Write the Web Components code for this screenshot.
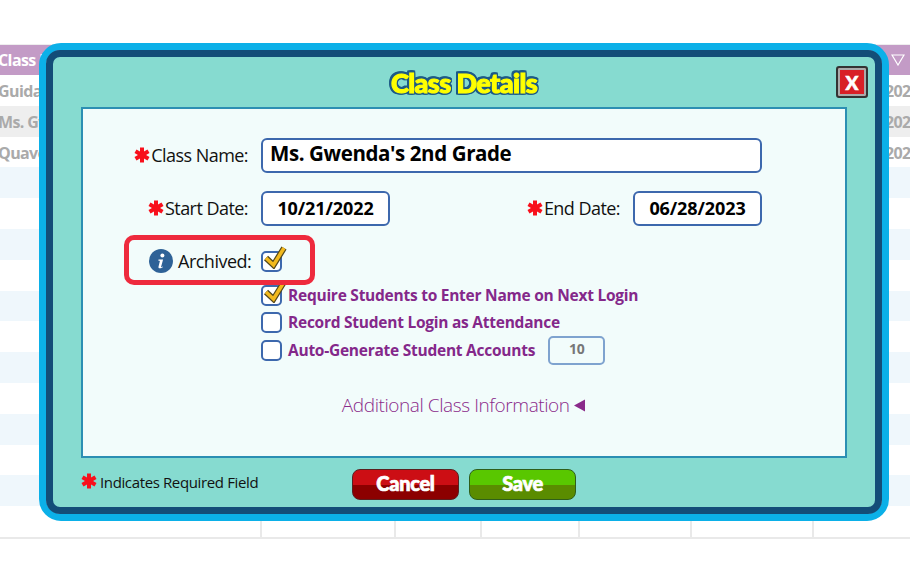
<!DOCTYPE html>
<html>
<head>
<meta charset="utf-8">
<style>
  html, body { margin: 0; padding: 0; background: #fff; }
  body { width: 910px; height: 571px; overflow: hidden; position: relative; font-family: "Open Sans", "Liberation Sans", sans-serif; }
</style>
</head>
<body>
<class-table></class-table>
<class-modal>
  <form-field slot="name" label="Class Name:" required wide value="Ms. Gwenda's 2nd Grade"></form-field>
  <form-field slot="start" label="Start Date:" required value="10/21/2022"></form-field>
  <form-field slot="end" label="End Date:" required auto value="06/28/2023"></form-field>
  <check-box slot="archived" checked></check-box>
  <check-box slot="opts" checked>Require Students to Enter Name on Next Login</check-box>
  <check-box slot="opts">Record Student Login as Attendance</check-box>
  <check-box slot="opts" count="10">Auto-Generate Student Accounts</check-box>
  <game-button slot="btns" color="red">Cancel</game-button>
  <game-button slot="btns" color="green">Save</game-button>
</class-modal>

<script>
const ASTERISK = `<svg class="star" width="18" height="18" viewBox="-9 -9 18 18" aria-hidden="true"><g stroke="#f8101c" stroke-width="4" stroke-linecap="butt"><path d="M0-7.500V7.500"/><path d="M-6.500-3.800L6.500 3.800"/><path d="M-6.500 3.800L6.500-3.800"/></g></svg>`;

class ClassTable extends HTMLElement {
  constructor() {
    super();
    this.attachShadow({ mode: 'open' });
    const names = ['Guidance Class', "Ms. Gwenda's 2nd Grade", 'Quaver Class'];
    let rows = '';
    for (let i = 0; i < 15; i++) {
      let cls = i == 1 ? 'gray' : (i >= 3 && i % 2 == 1 ? 'blue' : '');
      let name = names[i] || '';
      let yr = i < 3 ? '2022' : '';
      rows += `<div class="row ${cls}"><span class="first">${name}</span><span></span><span></span><span></span><span></span><span></span><span class="last">${yr}</span></div>`;
    }
    this.shadowRoot.innerHTML = `
    <style>
      :host { display: block; padding-top: 44px; }
      .head, .row { display: grid; grid-template-columns: 262px 134px 86px 98px 112px 122px 96px; font: 700 16px "Open Sans", sans-serif; letter-spacing: -.6px; }
      .head { height: 31px; background: #c39bc6; color: #fff; border-top: 1px solid #eee; box-sizing: border-box; align-items: center; }
      .row { height: 30.8px; color: #aaa; align-items: stretch; line-height: 33px; }
      .row span { border-right: 2px solid #e9e9e9; overflow: hidden; white-space: nowrap; min-width: 0; }
      .row span.last { border-right: 0; }
      .row.gray { background: #eee; }
      .row.blue { background: #eff7fc; }
      .first { margin-left: -2px; }
      .last { padding-left: 71px; }
      .tri { justify-self: end; margin-right: 5px; display: flex; }
      .rows { border-bottom: 2px solid #e9e9e9; }
    </style>
    <div class="head"><span class="first">Class Name</span><span></span><span></span><span></span><span></span><span></span>
      <span class="tri"><svg width="14" height="12" viewBox="0 0 14 12"><path d="M1 1H13L7 11Z" fill="none" stroke="#fff" stroke-width="1.2"/></svg></span></div>
    <div class="rows">${rows}</div>`;
  }
}

class ClassModal extends HTMLElement {
  constructor() {
    super();
    this.attachShadow({ mode: 'open' });
    this.shadowRoot.innerHTML = `
    <style>
      :host { display: block; position: absolute; left: 39px; top: 43px; width: 850px; height: 478px; box-sizing: border-box;
        border: 7px solid #0bb0e8; border-radius: 22px; color: #111; }
      .inner { height: 100%; box-sizing: border-box; border: 7px solid #134d78; border-radius: 14px; background: #86dbd0;
        display: flex; flex-direction: column; }
      header { height: 50px; display: grid; grid-template-columns: 1fr auto 1fr; align-items: center; }
      h1 { grid-column: 2; margin: 0; font: 900 27px Lato, "Open Sans", sans-serif; letter-spacing: -.55px; color: #ffff00;
        -webkit-text-stroke: 1.1px #ffff00;
        filter: drop-shadow(1.2px 0 0 #1d5a86) drop-shadow(-1.2px 0 0 #1d5a86) drop-shadow(0 1.2px 0 #1d5a86) drop-shadow(0 -1.2px 0 #1d5a86); }
      .close { grid-column: 3; justify-self: end; margin: 0 7px 0 0; width: 32px; height: 32px; box-sizing: border-box;
        border: 2px solid #333; box-shadow: inset 0 0 0 2px #aaa; border-radius: 3px; background: #d81f26; color: #fff;
        font: 900 19px Lato, sans-serif; -webkit-text-stroke: .6px #fff; display: flex; align-items: center; justify-content: center; }
      .panel { height: 351px; margin: 0 28px; box-sizing: border-box; border: 2px solid #2c8fb3; background: #f2fcfb; padding-top: 29px; }
      .dates { display: flex; justify-content: space-between; width: 679px; margin-top: 18px; }
      .arch { display: flex; align-items: center; margin-top: 22px; height: 26px; padding-left: 66px; font-size: 18px; letter-spacing: -.5px; }
      .arch .i { width: 24px; height: 24px; margin-right: 5px; }
      .arch span { width: 83px; }
      .opts { display: flex; flex-direction: column; gap: 5.5px; margin: 10px 0 0 178px; }
      .more { margin-top: 31px; text-align: center; font-size: 19px; font-weight: 300; letter-spacing: -.42px; color: #8a2a8a; }
      .more svg { margin-left: -1px; }
      footer { flex: 1; display: grid; grid-template-columns: 1fr auto 1fr; align-items: center; }
      .note { display: flex; align-items: center; padding: 0 0 0 27px; font-size: 15px; letter-spacing: -.37px; white-space: nowrap; }
      .note span { padding-bottom: 2px; }
      .note svg { margin-right: 2px; margin-top: -4px; }
      .btns { grid-column: 2; display: flex; gap: 10px; margin-top: 3px; }
      .hl { position: absolute; left: 78px; top: 185px; width: 191px; height: 50px; box-sizing: border-box; border: 5px solid #ee2a3d; border-radius: 10px; }
    </style>
    <div class="inner">
      <header><h1>Class Details</h1><div class="close">X</div></header>
      <div class="panel">
        <slot name="name"></slot>
        <div class="dates"><slot name="start"></slot><slot name="end"></slot></div>
        <div class="arch">
          <svg class="i" viewBox="0 0 24 24"><circle cx="12" cy="12" r="12" fill="#2e6297"/><circle cx="13.4" cy="6.4" r="2" fill="#fff"/><path d="M9.5 10.600h4.600l-2 7.200c-.1.500.3.600 1.700-.4l.2.700c-1.600 1.400-5 2-4.500-.3l1.400-5.900c-.6 0-1.400 0-1.500-.1z" fill="#fff"/></svg>
          <span>Archived:</span>
          <slot name="archived"></slot>
        </div>
        <div class="opts"><slot name="opts"></slot></div>
        <div class="more">Additional Class Information <svg width="13" height="13" viewBox="0 0 13 13"><path d="M12 0.500V12.500L1 6.500Z" fill="#8a2a8a"/></svg></div>
      </div>
      <footer>
        <div class="note">${ASTERISK}<span>Indicates Required Field</span></div>
        <div class="btns"><slot name="btns"></slot></div>
      </footer>
    </div>
    <div class="hl"></div>`;
  }
}

class FormField extends HTMLElement {
  constructor() {
    super();
    this.attachShadow({ mode: 'open' });
    const wide = this.hasAttribute('wide');
    const auto = this.hasAttribute('auto');
    this.shadowRoot.innerHTML = `
    <style>
      :host { display: flex; align-items: center; }
      .label { display: flex; align-items: center; justify-content: flex-end; font-size: 18px; letter-spacing: -.55px; white-space: nowrap; }
      .label span { padding-bottom: 1px; }
      .star { margin-right: 0; margin-bottom: 2px; }
      .box { height: 35px; box-sizing: border-box; border: 2px solid #3d68ad; border-radius: 6px; background: #fff; color: #000; display: flex; align-items: center; font-weight: 700; padding-bottom: 6px; }
      .box.wide { width: 501px; margin-left: 13px; padding-left: 7px; font-size: 20.5px; letter-spacing: -.4px; }
      .box.small { width: 129px; margin-left: 13px; justify-content: center; font-size: 18px; letter-spacing: -.1px; padding-bottom: 2px; }
      .label.l1 { width: 165px; }
      .label.la { width: auto; }
    </style>
    <div class="label ${auto ? 'la' : 'l1'}">${ASTERISK}<span>${this.getAttribute('label')}</span></div>
    <div class="box ${wide ? 'wide' : 'small'}">${this.getAttribute('value')}</div>`;
  }
}

class CheckBox extends HTMLElement {
  constructor() {
    super();
    this.attachShadow({ mode: 'open' });
    const mark = this.hasAttribute('checked') ? `<svg class="tick" width="26" height="26" viewBox="0 0 26 26"><path d="M4 15l7.500 7L22 5" fill="none" stroke="#54481c" stroke-width="6"/><path d="M4 15l7.500 7L22 5" fill="none" stroke="#f2b91c" stroke-width="3.500"/></svg>` : '';
    const count = this.getAttribute('count');
    this.shadowRoot.innerHTML = `
    <style>
      :host { display: flex; align-items: center; height: 22px; color: #84288a; font-size: 15.5px; font-weight: 700; letter-spacing: -.25px; white-space: nowrap; }
      .box { position: relative; width: 21px; height: 21px; flex: none; box-sizing: border-box; border: 2px solid #3d68ad; border-radius: 5px; background: #fff; }
      .tick { position: absolute; left: -1px; top: -10px; }
      .txt { margin-left: 6px; padding-bottom: 1px; }
      .num { margin-left: 13px; width: 57px; height: 29px; box-sizing: border-box; border: 2px solid #7fa3cf; border-radius: 5px; color: #777; font-size: 14px; display: flex; align-items: center; justify-content: center; padding-bottom: 4px; }
    </style>
    <div class="box">${mark}</div><span class="txt"><slot></slot></span>${count ? `<div class="num">${count}</div>` : ''}`;
  }
}

class GameButton extends HTMLElement {
  constructor() {
    super();
    this.attachShadow({ mode: 'open' });
    const red = this.getAttribute('color') == 'red';
    const top = red ? '#cc0e14' : '#59c700';
    const bot = red ? '#8c0000' : '#5a8c00';
    const edge = red ? '#5a2020' : '#2f5f1a';
    this.shadowRoot.innerHTML = `
    <style>
      :host { display: block; width: 107px; height: 31px; box-sizing: border-box; border: 1px solid ${edge}; border-radius: 8px;
        background: linear-gradient(${top} 50%, ${bot} 50%); color: #fff; font: 900 20px Lato, sans-serif; letter-spacing: -.3px; -webkit-text-stroke: .7px #fff; text-align: center; line-height: 27px; }
    </style>
    <slot></slot>`;
  }
}

customElements.define('class-table', ClassTable);
customElements.define('class-modal', ClassModal);
customElements.define('form-field', FormField);
customElements.define('check-box', CheckBox);
customElements.define('game-button', GameButton);
</script>
</body>
</html>
